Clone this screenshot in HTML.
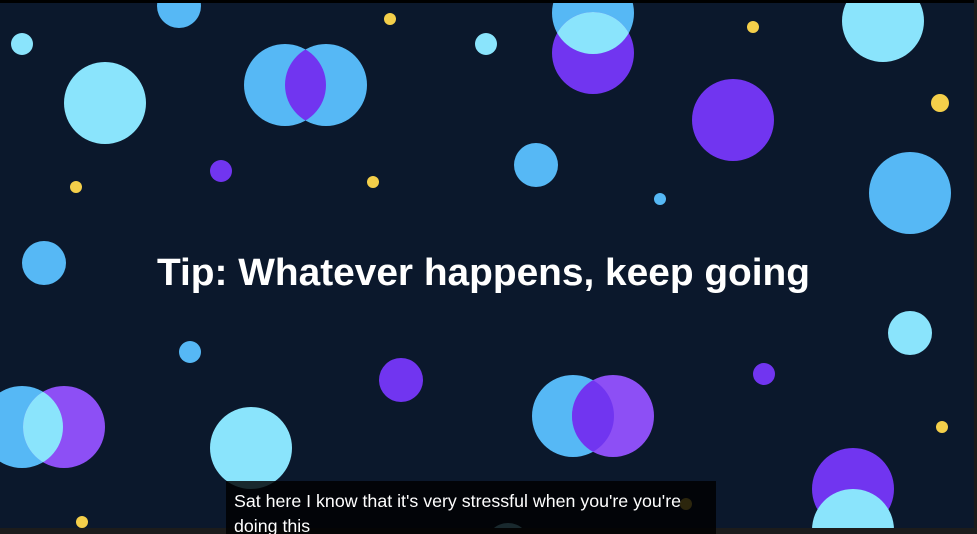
<!DOCTYPE html>
<html><head><style>
html,body{margin:0;padding:0;width:977px;height:534px;overflow:hidden;background:#0b182c}
svg{position:absolute;left:0;top:0}
.sub{position:absolute;left:226px;top:481px;width:490px;height:53px;background:rgba(0,0,0,0.82);color:#fff;font-family:"Liberation Sans",sans-serif;font-size:17.8px;line-height:25px;padding:8px 0 0 8px;box-sizing:border-box;overflow:hidden;white-space:nowrap}
</style></head><body>
<svg width="977" height="534" viewBox="0 0 977 534">
<defs>
<clipPath id="a"><circle cx="285" cy="85" r="41"/></clipPath>
<clipPath id="b"><circle cx="593" cy="13" r="41"/></clipPath>
<clipPath id="c"><circle cx="573" cy="416" r="41"/></clipPath>
<clipPath id="d"><circle cx="22" cy="427" r="41"/></clipPath>
</defs>
<rect width="977" height="534" fill="#0b182c"/>
<g>
<circle cx="179" cy="6" r="22" fill="#56b8f5"/>
<circle cx="22" cy="44" r="11" fill="#8ae4fc"/>
<circle cx="390" cy="19" r="6" fill="#f4cf4a"/>
<circle cx="486" cy="44" r="11" fill="#8ae4fc"/>
<circle cx="593" cy="13" r="41" fill="#56b8f5"/>
<circle cx="593" cy="53" r="41" fill="#7135f0"/>
<circle cx="593" cy="53" r="41" fill="#8ae4fc" clip-path="url(#b)"/>
<circle cx="753" cy="27" r="6" fill="#f4cf4a"/>
<circle cx="883" cy="21" r="41" fill="#8ae4fc"/>
<circle cx="940" cy="103" r="9" fill="#f4cf4a"/>
<circle cx="105" cy="103" r="41" fill="#8ae4fc"/>
<circle cx="285" cy="85" r="41" fill="#56b8f5"/>
<circle cx="326" cy="85" r="41" fill="#56b8f5"/>
<circle cx="326" cy="85" r="41" fill="#7135f0" clip-path="url(#a)"/>
<circle cx="733" cy="120" r="41" fill="#7135f0"/>
<circle cx="221" cy="171" r="11" fill="#7135f0"/>
<circle cx="76" cy="187" r="6" fill="#f4cf4a"/>
<circle cx="373" cy="182" r="6" fill="#f4cf4a"/>
<circle cx="536" cy="165" r="22" fill="#56b8f5"/>
<circle cx="660" cy="199" r="6" fill="#56b8f5"/>
<circle cx="910" cy="193" r="41" fill="#56b8f5"/>
<circle cx="44" cy="263" r="22" fill="#56b8f5"/>
<circle cx="910" cy="333" r="22" fill="#8ae4fc"/>
<circle cx="190" cy="352" r="11" fill="#56b8f5"/>
<circle cx="401" cy="380" r="22" fill="#7135f0"/>
<circle cx="764" cy="374" r="11" fill="#7135f0"/>
<circle cx="573" cy="416" r="41" fill="#56b8f5"/>
<circle cx="613" cy="416" r="41" fill="#8d4ff5"/>
<circle cx="613" cy="416" r="41" fill="#7135f0" clip-path="url(#c)"/>
<circle cx="22" cy="427" r="41" fill="#56b8f5"/>
<circle cx="64" cy="427" r="41" fill="#8d4ff5"/>
<circle cx="64" cy="427" r="41" fill="#8ae4fc" clip-path="url(#d)"/>
<circle cx="251" cy="448" r="41" fill="#8ae4fc"/>
<circle cx="942" cy="427" r="6" fill="#f4cf4a"/>
<circle cx="853" cy="489" r="41" fill="#7135f0"/>
<circle cx="853" cy="530" r="41" fill="#8ae4fc"/>
<circle cx="82" cy="522" r="6" fill="#f4cf4a"/>
<circle cx="686" cy="504" r="6" fill="#f4cf4a"/>
<circle cx="508" cy="545" r="22" fill="#8ae4fc"/>
</g>
<text x="157" y="285" font-family="Liberation Sans, sans-serif" font-weight="bold" font-size="38" fill="#fff" textLength="653" lengthAdjust="spacingAndGlyphs">Tip: Whatever happens, keep going</text>
<rect x="0" y="0" width="977" height="3" fill="#000"/>
<rect x="974" y="0" width="3" height="534" fill="#1a1a1a"/>
<rect x="0" y="528" width="977" height="6" fill="#1c1c1c"/>
</svg>
<div class="sub">Sat here I know that it's very stressful when you're you're<br>doing this</div>
</body></html>
